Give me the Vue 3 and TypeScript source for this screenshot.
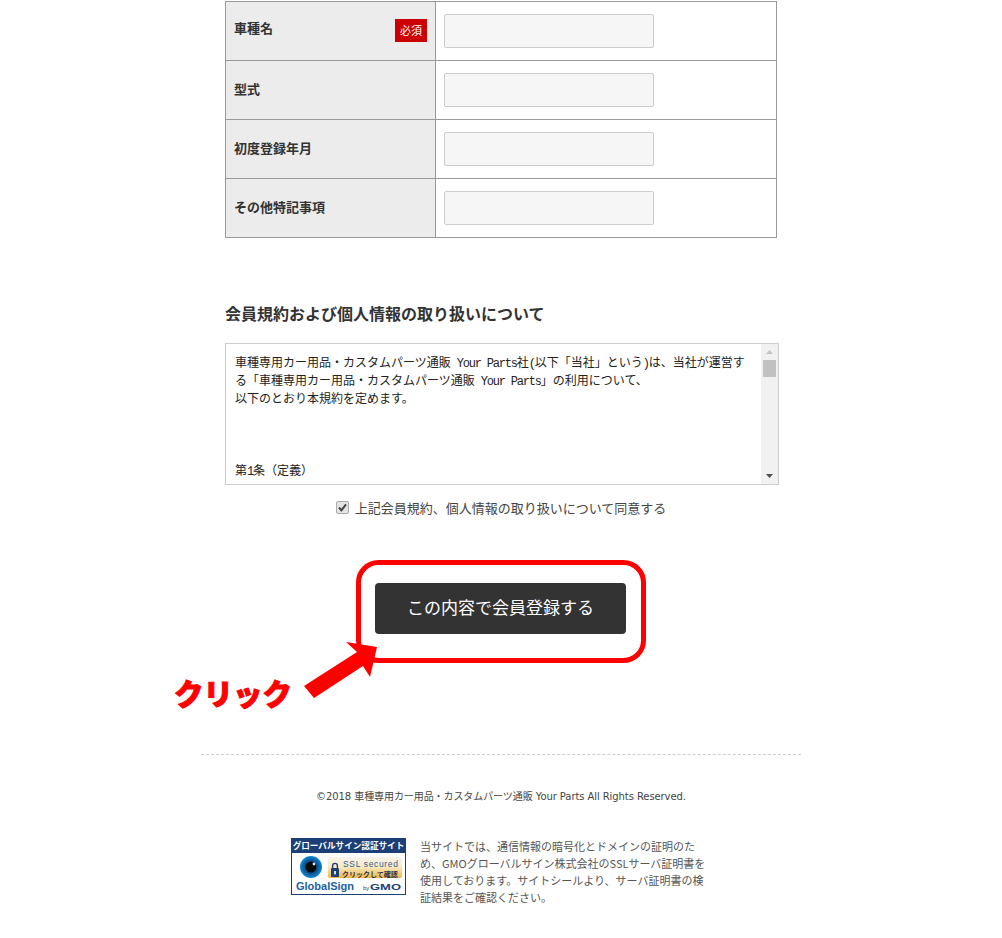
<script setup lang="ts">
const rows = [
  { label: '車種名', required: true },
  { label: '型式', required: false },
  { label: '初度登録年月', required: false },
  { label: 'その他特記事項', required: false }
]

const termsLines = [
  '車種専用カー用品・カスタムパーツ通販 Your Parts社(以下「当社」という)は、当社が運営す',
  'る「車種専用カー用品・カスタムパーツ通販 Your Parts」の利用について、',
  '以下のとおり本規約を定めます。',
  '',
  '',
  '',
  '第1条（定義）'
]

// half-width runs get their own span, the reference font draws them 6px wide
function splitLine(line: string) {
  return line.split(/([\x20-\x7e]+)/).filter(Boolean).map((text) => ({
    text,
    latin: /^[\x20-\x7e]/.test(text)
  }))
}

const sealNote = [
  '当サイトでは、通信情報の暗号化とドメインの証明のた',
  'め、GMOグローバルサイン株式会社のSSLサーバ証明書を',
  '使用しております。サイトシールより、サーバ証明書の検',
  '証結果をご確認ください。'
]
</script>

<template>
  <div class="page">
    <table class="car-table">
      <tr v-for="row in rows" :key="row.label">
        <th>
          <div class="car-table__label">
            <span class="car-table__text">{{ row.label }}</span>
            <em v-if="row.required" class="required">必須</em>
          </div>
        </th>
        <td><input class="car-table__input" type="text" /></td>
      </tr>
    </table>

    <h2 class="terms-title">会員規約および個人情報の取り扱いについて</h2>

    <div class="terms">
      <div class="terms__body">
        <div v-for="(line, i) in termsLines" :key="i" class="terms__line">
          <span
            v-for="(part, j) in splitLine(line)"
            :key="j"
            :class="{ terms__latin: part.latin }"
          >{{ part.text }}</span>
        </div>
      </div>
      <div class="terms__bar">
        <svg width="17" height="16" viewBox="0 0 17 16"><path d="M8.5 6 L12 10 L5 10 Z" fill="#c4c4c4" /></svg>
        <div class="terms__thumb" />
        <div class="terms__gap" />
        <svg width="17" height="16" viewBox="0 0 17 16"><path d="M5 6 L12 6 L8.5 10 Z" fill="#505050" /></svg>
      </div>
    </div>

    <label class="agree">
      <span class="agree__box">
        <input type="checkbox" checked />
        <svg width="13" height="13" viewBox="0 0 13 13">
          <path d="M3 6.5 L5.4 9.4 L10 3.4" fill="none" stroke="#444" stroke-width="2" />
        </svg>
      </span>
      <span>上記会員規約、個人情報の取り扱いについて同意する</span>
    </label>

    <div class="submit">
      <button class="submit__button" type="button">この内容で会員登録する</button>
    </div>

    <footer class="footer">
      <p class="footer__copy">©2018 車種専用カー用品・カスタムパーツ通販 Your Parts All Rights Reserved.</p>
      <div class="footer__seal">
        <svg class="seal" width="115" height="57" viewBox="0 0 115 57">
          <defs>
            <linearGradient id="sslBg" x1="0" y1="0" x2="0" y2="1">
              <stop offset="0" stop-color="#f6f4ec" />
              <stop offset="0.45" stop-color="#f7ecc8" />
              <stop offset="1" stop-color="#f4b440" />
            </linearGradient>
            <radialGradient id="eyeBg" cx="0.5" cy="0.5" r="0.5">
              <stop offset="0.55" stop-color="#0a4f8a" />
              <stop offset="1" stop-color="#1187d8" />
            </radialGradient>
          </defs>
          <rect width="115" height="57" fill="#1c3f78" />
          <rect x="1" y="15" width="113" height="41" fill="#fff" />
          <text x="57.5" y="11" class="seal__top">グローバルサイン認証サイト</text>
          <circle cx="20" cy="29" r="11" fill="url(#eyeBg)" />
          <circle cx="20" cy="29" r="5.5" fill="#0b0b0b" />
          <circle cx="23" cy="26" r="1.4" fill="#cfe9f8" />
          <rect x="37" y="19" width="74" height="21" rx="2" fill="url(#sslBg)" />
          <rect x="40" y="30" width="8" height="9" rx="1" fill="#1c3f78" />
          <path d="M41.6 30 V27.8 a2.4 2.4 0 0 1 4.8 0 V30" fill="none" stroke="#1c3f78" stroke-width="1.4" />
          <rect x="43.2" y="33" width="1.6" height="3.4" fill="#fff" />
          <text x="52" y="29" class="seal__ssl" textLength="55">SSL secured</text>
          <text x="51" y="38.5" class="seal__click">クリックして確認</text>
          <text x="5" y="52" class="seal__brand">GlobalSign</text>
          <text x="72" y="52" class="seal__by">by</text>
          <text x="79" y="52" class="seal__gmo" textLength="31" lengthAdjust="spacingAndGlyphs">GMO</text>
        </svg>
        <p class="footer__note">
          <span v-for="line in sealNote" :key="line">{{ line }}</span>
        </p>
      </div>
    </footer>

    <!-- hand-drawn annotation over the screenshot -->
    <svg class="marker" width="1002" height="938" viewBox="0 0 1002 938">
      <rect x="358.5" y="562.5" width="285" height="98" rx="20" fill="none" stroke="#ff0000" stroke-width="5" />
      <polygon points="304,686 357,652 346,642 377,647 370,677 363,666 314,698" fill="#ff0000" />
    </svg>
    <div class="marker-label">クリック</div>
  </div>
</template>

<style scoped>
.page {
  position: relative;
  width: 1002px;
  height: 938px;
  overflow: hidden;
  background: #fff;
  color: #333;
  font-family: "Noto Sans CJK JP", "Liberation Sans", sans-serif;
}

.car-table {
  border-collapse: collapse;
  width: 552px;
  margin: 1px 0 0 225px;
  table-layout: fixed;
}
.car-table th,
.car-table td {
  border: 1px solid #999;
  height: 59px;
  padding: 0;
  box-sizing: border-box;
}
.car-table th {
  width: 210px;
  background: #ececec;
  text-align: left;
  font-size: 13px;
  line-height: 18px;
  font-weight: 700;
  color: #333;
}
.car-table__label {
  display: flex;
  justify-content: space-between;
  align-items: flex-start;
  padding: 0 8px 1px 8px;
}
.car-table__text {
  margin-bottom: 2px;
}
.required {
  display: block;
  width: 32px;
  height: 23px;
  background: #cc0000;
  color: #fff;
  font-size: 11px;
  font-style: normal;
  font-weight: 400;
  line-height: 23px;
  text-align: center;
}
.car-table td {
  padding-left: 8px;
}
.car-table__input {
  display: block;
  width: 210px;
  height: 34px;
  box-sizing: border-box;
  background: #f6f6f6;
  border: 1px solid #ccc;
  border-radius: 2px;
  margin-top: -1px;
}

.terms-title {
  margin: 63px 0 0 225px;
  font-size: 16px;
  line-height: 24px;
  font-weight: 700;
  color: #333;
}

.terms {
  display: flex;
  width: 554px;
  height: 142px;
  box-sizing: border-box;
  margin: 18px 0 0 225px;
  border: 1px solid #ccc;
  background: #fff;
}
.terms__body {
  flex: 1;
  padding: 9px 0 0 9px;
  font-family: "Noto Sans CJK JP", "Liberation Mono", monospace;
  font-size: 12px;
  line-height: 18px;
  color: #222;
  white-space: pre;
  overflow: hidden;
}
.terms__line {
  height: 18px;
}
.terms__latin {
  font-family: "Liberation Mono", monospace;
  font-size: 12px;
  letter-spacing: -1.2px;
}
.terms__bar {
  display: flex;
  flex-direction: column;
  width: 17px;
  background: #f1f1f1;
}
.terms__thumb {
  width: 13px;
  height: 17px;
  margin: 0 2px;
  background: #c1c1c1;
}
.terms__gap {
  flex: 1;
}

.agree {
  display: flex;
  justify-content: center;
  align-items: center;
  gap: 6px;
  width: 1002px;
  height: 20px;
  margin-top: 12px;
  font-size: 13px;
  color: #444;
}
.agree__box {
  position: relative;
  display: block;
  width: 13px;
  height: 13px;
}
.agree__box input {
  display: block;
  appearance: none;
  box-sizing: border-box;
  width: 13px;
  height: 13px;
  margin: 0;
  background: #e4e4e4;
  border: 1px solid #aaa;
  border-radius: 2px;
}
.agree__box svg {
  position: absolute;
  left: 0;
  top: 0;
}

.submit {
  display: flex;
  justify-content: center;
  margin-top: 66px;
  padding-right: 1px;
}
.submit__button {
  width: 251px;
  height: 51px;
  padding: 0 0 4px;
  border: 0;
  border-radius: 4px;
  background: #333;
  color: #fff;
  font-family: inherit;
  font-size: 17px;
}

.footer {
  width: 600px;
  margin: 120px 0 0 201px;
  border-top: 1px dashed #ccc;
}
.footer__copy {
  margin: 35px 0 0;
  text-align: center;
  font-family: "DejaVu Sans", "Noto Sans CJK JP", sans-serif;
  font-size: 10px;
  line-height: 14px;
  letter-spacing: -0.08px;
  color: #444;
}
.footer__seal {
  display: flex;
  gap: 14px;
  margin: 34px 0 0 90px;
}
.seal {
  flex: none;
}
.seal__top {
  fill: #fff;
  font-size: 8.6px;
  font-weight: 700;
  text-anchor: middle;
}
.seal__ssl {
  fill: #3a5a8c;
  font-family: "Liberation Sans", sans-serif;
  font-size: 8.5px;
}
.seal__click {
  fill: #1c2f50;
  font-size: 7px;
  font-weight: 700;
}
.seal__brand {
  fill: #1c5fa5;
  font-family: "Liberation Sans", sans-serif;
  font-size: 11px;
  font-weight: 700;
}
.seal__by {
  fill: #1c3f78;
  font-family: "Liberation Sans", sans-serif;
  font-size: 6px;
}
.seal__gmo {
  fill: #1c3f78;
  font-family: "Liberation Sans", sans-serif;
  font-size: 9.5px;
  font-weight: 700;
}
.footer__note {
  margin: 0;
  font-size: 11px;
  line-height: 17px;
  color: #555;
}
.footer__note span {
  display: block;
  white-space: nowrap;
}

.marker {
  position: absolute;
  left: 0;
  top: 0;
  pointer-events: none;
}
.marker-label {
  position: absolute;
  left: 174px;
  top: 672px;
  font-size: 29.5px;
  line-height: 40px;
  font-weight: 900;
  color: #ff0000;
  -webkit-text-stroke: 1px #ff0000;
  white-space: nowrap;
}
</style>
